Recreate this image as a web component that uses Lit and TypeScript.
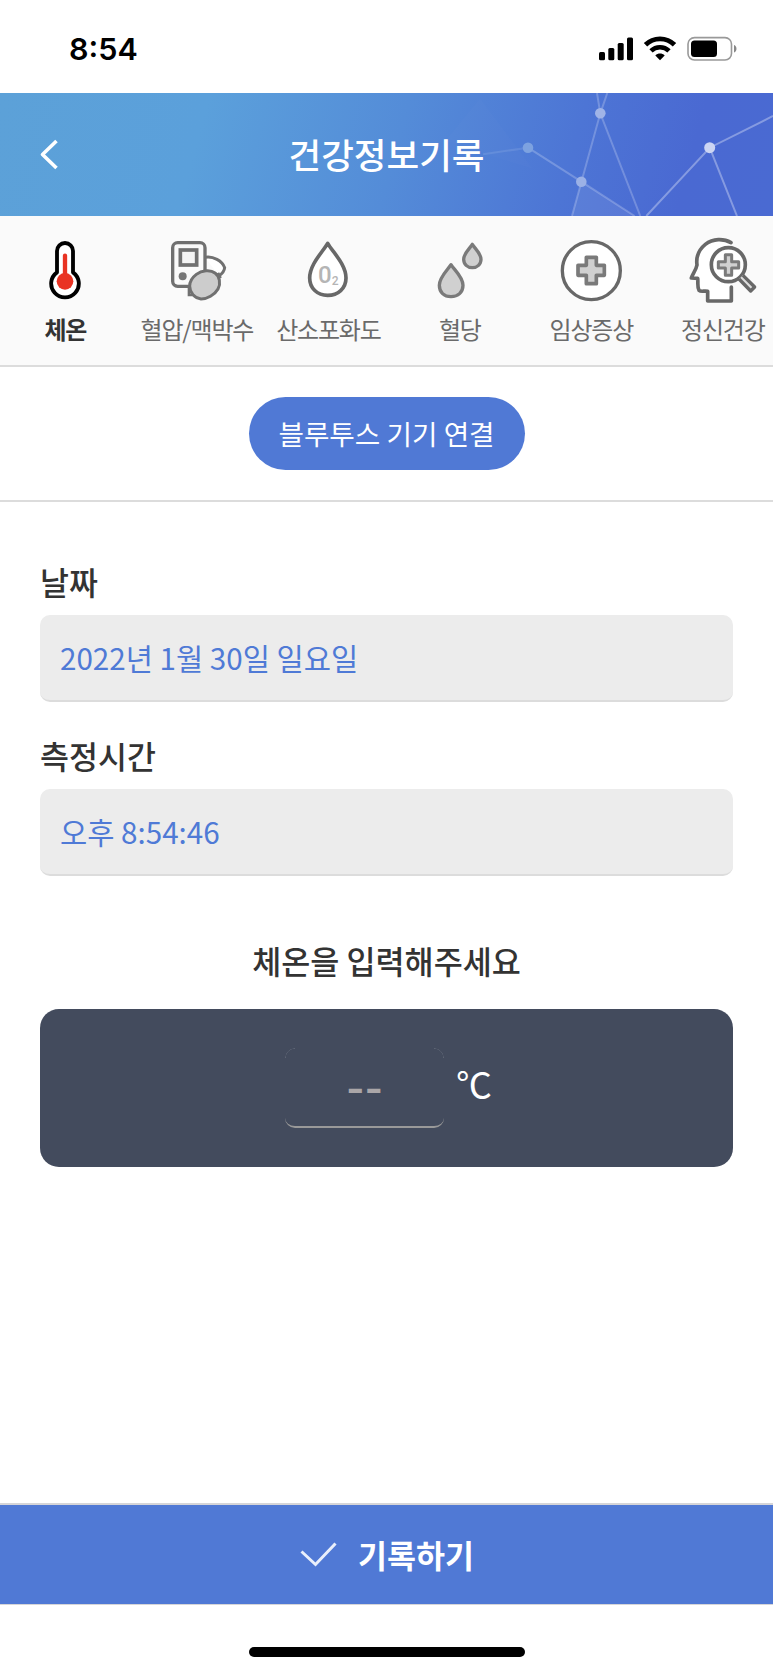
import { LitElement, html, svg, css } from "lit";
import { customElement, property } from "lit/decorators.js";

const thermometer = svg`
  <path d="M172 172 V108 a24 24 0 0 1 48 0 V172 a41.500 41.500 0 1 1 -48 0Z" fill="#fff" stroke="#000" stroke-width="11.500" stroke-linejoin="round"/>
  <path d="M196 122 V190" stroke="#e93323" stroke-width="13" stroke-linecap="round"/>
  <circle cx="196" cy="199" r="25" fill="#e93323"/>`;

const monitor = svg`
  <path d="M616 127 C640 122 668 138 675 158 C674 168 668 176 658 182" fill="#fff" stroke="#707070" stroke-width="9" stroke-linecap="round"/>
  <path d="M568 216 V240 H584" fill="none" stroke="#707070" stroke-width="8"/>
  <rect x="519" y="83" width="97" height="131" rx="15" fill="#fafafa" stroke="#707070" stroke-width="10"/>
  <rect x="542" y="105" width="49" height="45" fill="#f4f4f4" stroke="#707070" stroke-width="11"/>
  <circle cx="549" cy="184" r="12" fill="#777"/>
  <path d="M590 178 C606 166 632 163 646 174 C660 184 664 205 655 222 C645 240 622 252 604 252 C585 250 570 232 570 213 C570 199 577 188 590 178Z" fill="#ccc" stroke="#707070" stroke-width="9"/>
  <path d="M654 174 L662 190" stroke="#707070" stroke-width="10"/>`;

const oxygen = svg`
  <path d="M205 85 C220 111 260 148 260 189 C260 220 236 241 205 241 C174 241 151 220 151 189 C151 148 190 111 205 85Z" fill="#fff" stroke="#686868" stroke-width="11" stroke-linejoin="round"/>
  <text x="176" y="205" class="glyph" font-size="70" textLength="41" lengthAdjust="spacingAndGlyphs">0</text>
  <text x="217" y="211" class="glyph" font-size="36">2</text>`;

const glucose = svg`
  <path d="M638 88 C646 101 664 115 664 133 C664 148 653 158 638 158 C623 158 612 148 612 133 C612 115 630 101 638 88Z" fill="#d0d0d0" stroke="#7a7a7a" stroke-width="10" stroke-linejoin="round"/>
  <path d="M574 149 C584 165 610 186 610 211 C610 232 595 245 574 245 C553 245 539 232 539 211 C539 186 564 165 574 149Z" fill="#d0d0d0" stroke="#7a7a7a" stroke-width="10" stroke-linejoin="round"/>`;

const clinical = svg`
  <circle cx="238" cy="167" r="87" fill="#fff" stroke="#686868" stroke-width="10"/>
  <path d="M223 127 h30 v24 h24 v30 h-24 v25 h-30 v-25 h-25 v-30 h25Z" fill="#d0d0d0" stroke="#7a7a7a" stroke-width="11" stroke-linejoin="round"/>`;

const mental = svg`
  <path d="M654 82 C632 70 600 70 577 88 C555 106 549 128 552 150 C549 166 538 178 535 189 L554 190 C556 202 552 216 558 226 C565 232 574 226 584 229 V258 H655 V216 L656 120Z" fill="#fff"/>
  <path d="M654 83 C632 70 600 70 577 88 C555 106 549 128 552 150 C549 166 538 178 535 189 L554 190 C556 202 552 216 558 226 C565 232 574 226 584 229 V258 H655 V216" fill="none" stroke="#686868" stroke-width="11" stroke-linecap="round" stroke-linejoin="round"/>
  <circle cx="646" cy="149" r="51" fill="#fff" stroke="#686868" stroke-width="11"/>
  <path d="M637 119 h19 v21 h21 v19 h-21 v22 h-19 v-22 h-21 v-19 h21Z" fill="#d0d0d0" stroke="#7a7a7a" stroke-width="9" stroke-linejoin="round"/>
  <path d="M678 192 L713 228 L725 216 L690 181" fill="#ddd" stroke="#686868" stroke-width="10" stroke-linejoin="round"/>`;

@customElement("record-tab")
class RecordTab extends LitElement {
  @property() label = "";
  @property() box = "";
  @property({ attribute: false }) icon: unknown;
  @property({ type: Boolean, reflect: true }) active = false;

  static styles = css`
    :host { display: flex; flex-direction: column; align-items: center; flex: 0 0 131.500px; padding-top: 19px; color: #6a6a6a; }
    :host([active]) { color: #333; font-weight: 700; }
    .icon { width: 70px; height: 70px; overflow: visible; display: block; }
    .label { font-size: 24px; line-height: 36px; letter-spacing: -1.200px; margin-top: 6px; white-space: nowrap; }
    .glyph { font-family: Roboto, sans-serif; font-weight: 500; fill: #b5b5b5; }
  `;

  render() {
    return html`<svg class="icon" viewBox=${this.box}>${this.icon}</svg><span class="label">${this.label}</span>`;
  }
}

@customElement("value-field")
class ValueField extends LitElement {
  @property() label = "";
  @property() value = "";

  static styles = css`
    :host { display: block; }
    .label { font-size: 31.500px; line-height: 46px; font-weight: 500; color: #333; }
    .value { box-sizing: border-box; height: 87px; margin-top: 11px; padding: 0 20px; border-radius: 10px; border-bottom: 2px solid #dcdcdc; background: #ececec; color: #4f7ad6; font-size: 29.600px; line-height: 85px; }
  `;

  render() {
    return html`<div class="label">${this.label}</div><div class="value">${this.value}</div>`;
  }
}

@customElement("app-root")
class AppRoot extends LitElement {
  static styles = css`
    :host { display: flex; flex-direction: column; width: 773px; height: 1673px; overflow: hidden; background: #fff; color: #333; font-family: "Noto Sans CJK KR", sans-serif; }
    .status { flex: none; height: 93px; box-sizing: border-box; padding: 0 35px 0 69px; display: flex; align-items: center; justify-content: space-between; }
    .time { font-family: Inter, sans-serif; font-size: 30.500px; line-height: 40px; font-weight: 600; color: #000; padding-top: 4px; }
    .indicators { width: 140px; height: 30px; margin-top: 5px; display: block; }
    .header { flex: none; height: 123px; display: grid; background: linear-gradient(105deg, #5ca1d8 0%, #5ba0db 26%, #548cd8 51%, #4d75d5 73%, #4a69d2 88%, #4a6ad2 100%); }
    .network, .bar { grid-area: 1 / 1; }
    .network { width: 773px; height: 123px; display: block; }
    .bar { display: grid; grid-template-columns: 100px 1fr 100px; align-items: center; color: #fff; }
    .back { width: 20px; height: 36px; margin-left: 39px; display: block; }
    .title { text-align: center; font-size: 35.500px; line-height: 52px; font-weight: 500; padding-bottom: 2px; }
    .tabs { flex: none; height: 151px; box-sizing: border-box; display: flex; overflow: hidden; background: #fafafa; border-bottom: 2px solid #dcdcdc; }
    .tabs record-tab:first-child { margin-left: -.400px; }
    .connect { flex: none; height: 135px; box-sizing: border-box; border-bottom: 2px solid #dcdcdc; display: flex; justify-content: center; padding-top: 29.500px; }
    .pill { width: 276px; height: 73px; border: 0; border-radius: 37px; background: #5079d5; color: #fff; font: 400 27.700px/72px "Noto Sans CJK KR", sans-serif; padding: 0 0 1px; }
    .form { flex: 1; padding: 56px 40px 0; display: flex; flex-direction: column; }
    .second { margin-top: 30px; }
    .prompt { margin-top: 61px; text-align: center; font-size: 31.600px; line-height: 46px; font-weight: 500; }
    .panel { box-sizing: border-box; height: 158px; margin-top: 26px; border-radius: 19px; background: #434b5d; display: flex; align-items: flex-start; padding: 39px 0 0 245px; color: #fff; }
    .input {
      box-sizing: border-box; width: 159px; height: 80px; padding: 2px 0 0; border: 0 solid #999; border-bottom-width: 2px; border-radius: 10px;
      background:
        radial-gradient(circle at 100% 100%, transparent 9px, rgba(255, 255, 255, .16) 9.500px, transparent 10px) left top / 10px 10px no-repeat,
        radial-gradient(circle at 0 100%, transparent 9px, rgba(255, 255, 255, .16) 9.500px, transparent 10px) right top / 10px 10px no-repeat;
      text-align: center; font: 600 40px/70px Inter, sans-serif; color: #fff;
    }
    .input::placeholder { color: #aaa6a8; opacity: 1; }
    .unit { font-size: 36px; line-height: 52px; margin: 9px 0 0 12px; }
    .save { flex: none; height: 102px; box-sizing: border-box; border: 0 solid #d5d5d8; border-width: 2px 0 1px; background: #5079d5; color: #fff; display: flex; align-items: center; justify-content: center; gap: 21px; font-size: 31.500px; font-weight: 700; line-height: 46px; padding: 0 0 2px 1px; }
    .check { width: 37px; height: 26px; display: block; }
    .home { flex: none; height: 68px; display: flex; justify-content: center; align-items: flex-start; }
    .handle { width: 276px; height: 10px; border-radius: 5px; margin-top: 42px; background: #000; }
  `;

  private tabs = [
    { label: "체온", box: "91 60 210 210", icon: thermometer },
    { label: "혈압/맥박수", box: "487 60 210 210", icon: monitor },
    { label: "산소포화도", box: "101 60 210 210", icon: oxygen },
    { label: "혈당", box: "496 60 210 210", icon: glucose },
    { label: "임상증상", box: "132 60 210 210", icon: clinical },
    { label: "정신건강", box: "525 60 210 210", icon: mental },
  ];

  render() {
    return html`
      <div class="status">
        <span class="time">8:54</span>
        <svg class="indicators" viewBox="0 0 140 30">
          <rect x="1" y="18" width="6" height="8.300" rx="1.500"/>
          <rect x="10.300" y="14" width="6" height="12.300" rx="1.500"/>
          <rect x="19.700" y="9" width="6" height="17.300" rx="1.500"/>
          <rect x="29" y="3.500" width="6" height="22.800" rx="1.500"/>
          <path d="M47.500 10.800 C55.500 2.800 68.500 2.800 76.500 10.800" fill="none" stroke="#000" stroke-width="4.800"/>
          <path d="M53 16.900 C58 12 66 12 71 16.900" fill="none" stroke="#000" stroke-width="4.600"/>
          <path d="M57.300 21.500 C60 18.900 64 18.900 66.700 21.500 L62 26.300Z"/>
          <rect x="90" y="3.600" width="43.500" height="22.400" rx="6.500" fill="none" stroke="#999" stroke-width="1.600"/>
          <rect x="93" y="6.600" width="26" height="16.400" rx="3.500"/>
          <path d="M136 11 C139.300 12 139.300 17.500 136 18.500Z" fill="#888"/>
        </svg>
      </div>
      <div class="header">
        <svg class="network" viewBox="0 0 773 123">
          <path d="M480 5 L533 76 L445 48Z" fill="#fff" fill-opacity=".012"/>
          <path d="M581.300 88.700 L572 123 H634.700Z" fill="#fff" fill-opacity=".08"/>
          <g fill="none" stroke="#fff" stroke-width="2">
            <path d="M483 61.300 L528 54.700" stroke-opacity=".1"/>
            <path d="M528 54.700 L581.300 88.700 L634.700 123 M597 0 L600.300 20.300 L607.300 0 M572 123 L600.300 20.300 L640.300 123" stroke-opacity=".22"/>
            <path d="M646.300 123 L709.700 54.700 L773 23 M709.700 54.700 L737 123" stroke-opacity=".33"/>
          </g>
          <circle cx="528" cy="54.700" r="5.300" fill="#7da2e0"/>
          <circle cx="600.300" cy="20.300" r="5.300" fill="#a0b4e7"/>
          <circle cx="581.300" cy="88.700" r="5.300" fill="#9bb1e6"/>
          <circle cx="709.700" cy="54.700" r="5.500" fill="#ccd5f3"/>
        </svg>
        <div class="bar">
          <svg class="back" viewBox="0 0 20 36"><path d="M17.500 4 L3.500 17.500 L17.500 31" fill="none" stroke="#fff" stroke-width="3.600" stroke-linejoin="round" stroke-linecap="butt"/></svg>
          <span class="title">건강정보기록</span>
        </div>
      </div>
      <div class="tabs">
        ${this.tabs.map((t, i) => html`<record-tab .label=${t.label} .box=${t.box} .icon=${t.icon} ?active=${i === 0}></record-tab>`)}
      </div>
      <div class="connect"><button class="pill">블루투스 기기 연결</button></div>
      <div class="form">
        <value-field label="날짜" value="2022년 1월 30일 일요일"></value-field>
        <value-field class="second" label="측정시간" value="오후 8:54:46"></value-field>
        <div class="prompt">체온을 입력해주세요</div>
        <div class="panel">
          <input class="input" placeholder="--">
          <span class="unit">℃</span>
        </div>
      </div>
      <div class="save">
        <svg class="check" viewBox="0 0 37 26"><path d="M1.500 10.500 L15.500 23.500 L35.500 2.500" fill="none" stroke="#e9effb" stroke-width="3"/></svg>
        <span>기록하기</span>
      </div>
      <div class="home"><div class="handle"></div></div>
    `;
  }
}
